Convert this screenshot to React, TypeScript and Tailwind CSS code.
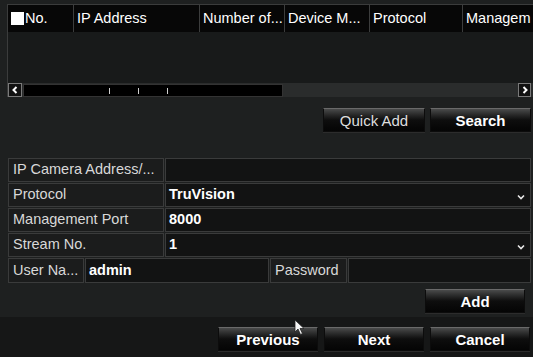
import React from 'react'

const columns = [
  { label: 'No.', w: 'w-[65px]', check: true },
  { label: 'IP Address', w: 'w-[126px]' },
  { label: 'Number of...', w: 'w-[85px]' },
  { label: 'Device M...', w: 'w-[85px]' },
  { label: 'Protocol', w: 'w-[93px]' },
  { label: 'Managem', w: 'flex-1' },
]

function Btn({ label, w, light }: { label: string; w: string; light?: boolean }) {
  return (
    <button
      className={`${w} h-[24px] flex items-center justify-center border border-[#0c0c0c] border-t-[#6a6a6a] bg-linear-to-b from-[#4a4b4b] via-[#0e0e0e] to-[#050505] shadow-[0_1px_0_#2c2c2c] text-[15px] leading-none ${light ? 'text-[#dedede]' : 'font-bold text-white'}`}
    >
      {label}
    </button>
  )
}

function Chevron() {
  return (
    <svg width="8" height="6" viewBox="0 0 8 6" className="absolute right-[5px] top-[10px]">
      <path d="M1 1.5 L4 4.5 L7 1.5" stroke="#e8e8e8" strokeWidth="1.6" fill="none" />
    </svg>
  )
}

function Row({ label, value, select }: { label: string; value?: string; select?: boolean }) {
  return (
    <div className="flex h-[24px] gap-[1px]">
      <div className="w-[156px] bg-[#1b1c1c] border border-[#3a3b3b] flex items-center pl-[4px] text-[14.5px] text-[#d8d8d8]">
        {label}
      </div>
      <div className="relative flex-1 bg-[#121313] border border-[#3a3b3b] flex items-center pl-[3px] text-[14.5px] font-bold text-white">
        {value}
        {select && <Chevron />}
      </div>
    </div>
  )
}

export default function App() {
  return (
    <div
      className="relative w-[533px] h-[357px] overflow-hidden bg-[#1e2020] flex flex-col"
      style={{ fontFamily: '"Liberation Sans", Arial, sans-serif' }}
    >
      {/* Tabelle */}
      <div className="mt-[4px] ml-[7px] border-t border-l border-[#3b3c3c]">
        <div className="flex h-[27px] bg-[#070707] overflow-hidden">
          {columns.map((c, i) => (
            <div
              key={c.label}
              className={`${c.w} shrink-0 flex items-center ${i > 0 ? 'border-l border-[#3c3d3d] pl-[3px]' : 'pl-[3px]'} text-[14.5px] text-white whitespace-nowrap`}
            >
              {c.check && <span className="w-[13px] h-[13px] bg-white mr-[1px]" />}
              {c.label}
            </div>
          ))}
        </div>
        <div className="h-[51px] bg-[#181a1a]" />
        <div className="flex h-[14px] items-center bg-[#2a2c2c] pr-[2px]">
          <div className="w-[14px] h-[14px] border border-[#7a7a7a] bg-[#111] flex items-center justify-center">
            <svg width="6" height="8" viewBox="0 0 6 8">
              <path d="M4.5 1 L1.5 4 L4.5 7" stroke="#fff" strokeWidth="2" fill="none" />
            </svg>
          </div>
          <div className="relative ml-[1px] w-[260px] h-[13px] bg-black border border-[#333]">
            <span className="absolute left-[85px] top-[3px] w-[1px] h-[6px] bg-[#d0d0d0]" />
            <span className="absolute left-[114px] top-[3px] w-[1px] h-[6px] bg-[#d0d0d0]" />
            <span className="absolute left-[143px] top-[3px] w-[1px] h-[6px] bg-[#d0d0d0]" />
          </div>
          <div className="flex-1" />
          <div className="w-[13px] h-[14px] border border-[#7a7a7a] bg-[#111] flex items-center justify-center">
            <svg width="6" height="8" viewBox="0 0 6 8">
              <path d="M1.5 1 L4.5 4 L1.5 7" stroke="#fff" strokeWidth="2" fill="none" />
            </svg>
          </div>
        </div>
      </div>

      {/* Suchknöpfe */}
      <div className="flex justify-end gap-[5px] pr-[2px] mt-[11px]">
        <Btn label="Quick Add" w="w-[102px]" light />
        <Btn label="Search" w="w-[101px]" />
      </div>

      {/* Formular */}
      <div className="mt-[26px] ml-[8px] mr-[2px] flex flex-col gap-[1px]">
        <Row label="IP Camera Address/..." />
        <Row label="Protocol" value="TruVision" select />
        <Row label="Management Port" value="8000" />
        <Row label="Stream No." value="1" select />
        <div className="flex h-[25px] gap-[1px]">
          <div className="w-[76px] bg-[#1b1c1c] border border-[#3a3b3b] flex items-center pl-[4px] text-[14.5px] text-[#d8d8d8] whitespace-nowrap">
            User Na...
          </div>
          <div className="w-[184px] bg-[#121313] border border-[#3a3b3b] flex items-center pl-[3px] text-[14.5px] font-bold text-white">
            admin
          </div>
          <div className="w-[77px] bg-[#1b1c1c] border border-[#3a3b3b] flex items-center pl-[4px] text-[14.5px] text-[#d8d8d8]">
            Password
          </div>
          <div className="flex-1 bg-[#121313] border border-[#3a3b3b]" />
        </div>
      </div>

      <div className="flex justify-end pr-[8px] mt-[6px]">
        <Btn label="Add" w="w-[100px]" />
      </div>

      {/* Fußleiste */}
      <div className="mt-[4px] flex-1 bg-[#161717] flex justify-end items-start gap-[6px] pr-[3px] pt-[10px]">
        <Btn label="Previous" w="w-[100px]" />
        <Btn label="Next" w="w-[100px]" />
        <Btn label="Cancel" w="w-[100px]" />
      </div>

      {/* Mauszeiger */}
      <svg width="12" height="17" viewBox="0 0 12 17" className="absolute left-[294px] top-[319px]">
        <path d="M1 1 L1 13 L4 10 L6.5 15.5 L8.5 14.5 L6 9.5 L10 9.5 Z" fill="#f4f4f4" stroke="#222" strokeWidth="0.8" />
      </svg>
    </div>
  )
}
